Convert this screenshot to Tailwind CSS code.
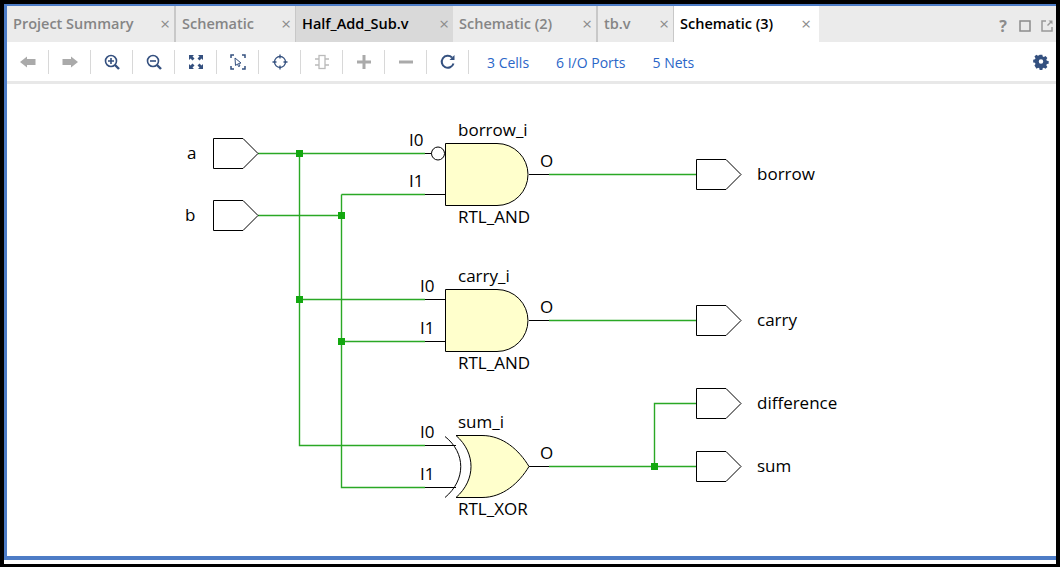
<!DOCTYPE html>
<html lang="en">
<head>
    <meta charset="UTF-8">
    <title>Schematic (3)</title>
    <script src="https://cdn.jsdelivr.net/npm/@tailwindcss/browser@4"></script>
</head>
<body class="bg-black overflow-hidden">
<div class="w-[1060px] h-[567px] bg-black pt-1 pl-1 pr-1 font-['Open_Sans',sans-serif]">
    <div class="h-[560px] bg-white">
    <div class="h-[556px] flex flex-col border-t-2 border-l-[3px] border-b-4 border-[#4d7cc6] bg-white">
        <!-- Tabs -->
        <div class="flex h-9 bg-[#ebebeb] text-[14.5px] font-semibold text-[#858585] shrink-0">
            <div class="w-[169px] flex items-center justify-between pl-1.5 pr-1 border-r-2 border-[#c8c8c8]"><span>Project Summary</span><span class="font-normal text-[17px] text-[#8c8c8c]">×</span></div>
            <div class="w-[120px] flex items-center justify-between pl-1.5 pr-1 border-r border-[#c8c8c8]"><span>Schematic</span><span class="font-normal text-[17px] text-[#8c8c8c]">×</span></div>
            <div class="w-[157px] flex items-center justify-between pl-1.5 pr-1 bg-[#d9d9d9] text-black"><span>Half_Add_Sub.v</span><span class="font-normal text-[17px] text-[#8c8c8c]">×</span></div>
            <div class="w-[145px] flex items-center justify-between pl-1.5 pr-1 border-r-2 border-[#c8c8c8]"><span>Schematic (2)</span><span class="font-normal text-[17px] text-[#8c8c8c]">×</span></div>
            <div class="w-[76px] flex items-center justify-between pl-1.5 pr-1 border-r border-[#c8c8c8]"><span>tb.v</span><span class="font-normal text-[17px] text-[#8c8c8c]">×</span></div>
            <div class="w-[145px] flex items-center justify-between pl-1.5 pr-2 bg-white text-black"><span>Schematic (3)</span><span class="font-normal text-[17px] text-[#8c8c8c]">×</span></div>
            <div class="flex-1 flex items-center justify-end gap-[8px] pr-[2px] pt-1">
                <span class="w-3.5 text-center text-[16px] font-bold text-[#8c8c8c]">?</span>
                <svg class="w-3.5 h-3.5" viewBox="0 0 14 14" fill="none" stroke="#8c8c8c"><rect x="2" y="2" width="10" height="10" stroke-width="1.5"/></svg>
                <svg class="w-3.5 h-3.5" viewBox="0 0 14 14" fill="none" stroke="#999999" stroke-width="1.5"><path d="M6 2H2v10h10V8"/><path d="M8.500 1.500h4v4z" fill="#999999" stroke="none"/><path d="M11 3L7.500 6.500"/></svg>
            </div>
        </div>

        <!-- Toolbar -->
        <div class="flex items-center h-[39px] pt-[1px] shrink-0">
            <div class="w-[42px] h-6 flex items-center justify-center border-r border-[#d8d8d8]">
                <svg class="w-4 h-4" viewBox="0 0 16 16" fill="#aaaaaa"><path d="M0 8l7-5.500V5h8.500v6H7v2.500z"/></svg>
            </div>
            <div class="w-[42px] h-6 flex items-center justify-center border-r border-[#d8d8d8]">
                <svg class="w-4 h-4" viewBox="0 0 16 16" fill="#aaaaaa"><path d="M16 8L9 2.500V5H.5v6H9v2.500z"/></svg>
            </div>
            <div class="w-[42px] h-6 flex items-center justify-center border-r border-[#d8d8d8]">
                <svg class="w-4 h-4" viewBox="0 0 16 16" fill="none" stroke="#34507f" stroke-width="1.600"><circle cx="7" cy="7" r="5.500"/><path d="M4 7h6M7 4v6"/><path d="M11 11l4 4" stroke-width="2.400"/></svg>
            </div>
            <div class="w-[42px] h-6 flex items-center justify-center border-r border-[#d8d8d8]">
                <svg class="w-4 h-4" viewBox="0 0 16 16" fill="none" stroke="#34507f" stroke-width="1.600"><circle cx="7" cy="7" r="5.500"/><path d="M4 7h6"/><path d="M11 11l4 4" stroke-width="2.400"/></svg>
            </div>
            <div class="w-[42px] h-6 flex items-center justify-center border-r border-[#d8d8d8]">
                <svg class="w-4 h-4" viewBox="0 0 16 16" fill="#34507f"><path d="M1 1h5L4.500 2.500 6.500 4.500 4.500 6.500 2.500 4.500 1 6zM15 1v5l-1.500-1.500-2 2-2-2 2-2L10 1zM1 15v-5l1.500 1.500 2-2 2 2-2 2L6 15zM15 15h-5l1.500-1.500-2-2 2-2 2 2L15 10z"/></svg>
            </div>
            <div class="w-[42px] h-6 flex items-center justify-center border-r border-[#d8d8d8]">
                <svg class="w-4 h-4" viewBox="0 0 16 16" fill="none" stroke="#34507f" stroke-width="1"><path d="M1 4V1h3M12 1h3v3M1 12v3h3M12 15h3v-3" stroke-width="1.500"/><path d="M5 4l6 5-2.500.5L10 12l-1.500.5-1-2.500L5.500 11.500z"/></svg>
            </div>
            <div class="w-[42px] h-6 flex items-center justify-center border-r border-[#d8d8d8]">
                <svg class="w-4 h-4" viewBox="0 0 16 16" fill="none" stroke="#34507f" stroke-width="1.300"><circle cx="8" cy="8" r="5.500"/><path d="M8 0.500v4M8 11.500v4M0.500 8h4M11.500 8h4"/></svg>
            </div>
            <div class="w-[42px] h-6 flex items-center justify-center border-r border-[#d8d8d8]">
                <svg class="w-4 h-4" viewBox="0 0 16 16" fill="none" stroke="#bbbbbb" stroke-width="1.300"><rect x="5" y="1.500" width="6" height="13"/><path d="M1 5h4M1 11h4M11 5h4M11 11h4"/></svg>
            </div>
            <div class="w-[42px] h-6 flex items-center justify-center border-r border-[#d8d8d8]">
                <svg class="w-4 h-4" viewBox="0 0 16 16" fill="#aaaaaa"><path d="M6.500 1h3v5.500H15v3H9.500V15h-3V9.500H1v-3h5.500z"/></svg>
            </div>
            <div class="w-[42px] h-6 flex items-center justify-center border-r border-[#d8d8d8]">
                <svg class="w-4 h-4" viewBox="0 0 16 16" fill="#aaaaaa"><path d="M1 6.500h14v3H1z"/></svg>
            </div>
            <div class="w-[42px] h-6 flex items-center justify-center border-r border-[#d8d8d8]">
                <svg class="w-4 h-4" viewBox="0 0 16 16" fill="none" stroke="#34507f" stroke-width="2"><path d="M13.500 9.500A6 6 0 1 1 12 3.500"/><path d="M14.500 1v5h-5z" fill="#34507f" stroke="none"/></svg>
            </div>
            <div class="flex items-center gap-[27px] pl-[18px] text-[14px] text-[#2a66c8]">
                <span>3 Cells</span>
                <span>6 I/O Ports</span>
                <span>5 Nets</span>
            </div>
            <svg class="w-4 h-4 ml-auto mr-[7px]" viewBox="0 0 16 16" fill="#34507f"><path fill-rule="evenodd" d="M6.500.5h3l.4 2.100 1.300.6 1.800-1.200 2.100 2.100-1.200 1.800.6 1.300 2 .4v3l-2 .4-.6 1.300 1.200 1.800-2.100 2.100-1.800-1.200-1.300.6-.4 2h-3l-.4-2-1.300-.6-1.800 1.200L.7 12.600l1.200-1.800-.6-1.300-2-.4v-3l2-.4.6-1.300L.7 2.600 2.800.5l1.800 1.200 1.300-.6zM8 5.500a2.500 2.500 0 1 0 0 5 2.500 2.500 0 0 0 0-5z" transform="translate(.8 .2) scale(.9)"/></svg>
        </div>
        <div class="h-[3px] bg-[#e8e8e8] shrink-0"></div>

        <!-- Schematic canvas -->
        <div class="flex-1 min-h-0">
            <svg class="block w-full h-full" viewBox="7 84 1049 472" fill="none" font-size="17">
                <!-- nets -->
                <g stroke="#2aa825" stroke-width="1.400">
                    <path d="M258 153.500H425"/>
                    <path d="M258 215.500H341.500"/>
                    <path d="M299.500 153.500V445.500H425"/>
                    <path d="M341.500 194.500H425M341.500 194.500V487.500H425"/>
                    <path d="M299.500 299.500H425M341.500 341.500H425"/>
                    <path d="M549 174.500H696M549 320.500H696M549 466.500H696"/>
                    <path d="M654.500 466.500V403.500H696"/>
                </g>
                <g fill="#13a80f">
                    <rect x="296" y="150" width="7" height="7"/>
                    <rect x="338" y="212" width="7" height="7"/>
                    <rect x="296" y="296" width="7" height="7"/>
                    <rect x="338" y="338" width="7" height="7"/>
                    <rect x="651" y="463" width="7" height="7"/>
                </g>
                <!-- pins -->
                <g stroke="#000000" stroke-width="1">
                    <path d="M425 153.500H432M425 194.500H445M425 299.500H445M425 341.500H445M425 445.500H456M425 487.500H456"/>
                    <path d="M529 174.500H549M529 320.500H549M529 466.500H549"/>
                    <circle cx="438" cy="153.500" r="6.500" fill="#ffffff"/>
                    <!-- gates -->
                    <path d="M445.500 143.500H497A31 31 0 0 1 497 205.500H445.500Z" fill="#ffffcc"/>
                    <path d="M445.500 289.500H497A31 31 0 0 1 497 351.500H445.500Z" fill="#ffffcc"/>
                    <path d="M456 435.500H482C503 435.500 519 450 529 466.500C519 483 503 497.500 482 497.500H456C476 480 476 453 456 435.500Z" fill="#ffffcc"/>
                    <path d="M445 436.500C466 453 466 480 445 497.500"/>
                    <!-- ports -->
                    <path d="M213.500 138.500H243L258 153.500L243 168.500H213.500Z" fill="#ffffff"/>
                    <path d="M213.500 200.500H243L258 215.500L243 230.500H213.500Z" fill="#ffffff"/>
                    <path d="M696.500 159.500H726L741 174.500L726 189.500H696.500Z" fill="#ffffff"/>
                    <path d="M696.500 305.500H726L741 320.500L726 335.500H696.500Z" fill="#ffffff"/>
                    <path d="M696.500 388.500H726L741 403.500L726 418.500H696.500Z" fill="#ffffff"/>
                    <path d="M696.500 451.500H726L741 466.500L726 481.500H696.500Z" fill="#ffffff"/>
                </g>
                <!-- labels -->
                <g fill="#000000" stroke="none">
                    <text x="187" y="159">a</text>
                    <text x="185" y="221">b</text>
                    <text x="409" y="146">I0</text>
                    <text x="409" y="187">I1</text>
                    <text x="458" y="136">borrow_i</text>
                    <text x="458" y="223">RTL_AND</text>
                    <text x="540" y="167">O</text>
                    <text x="420" y="292">I0</text>
                    <text x="420" y="334">I1</text>
                    <text x="458" y="282">carry_i</text>
                    <text x="458" y="369">RTL_AND</text>
                    <text x="540" y="313">O</text>
                    <text x="420" y="438">I0</text>
                    <text x="420" y="480">I1</text>
                    <text x="458" y="428">sum_i</text>
                    <text x="458" y="515">RTL_XOR</text>
                    <text x="540" y="459">O</text>
                    <text x="757" y="180">borrow</text>
                    <text x="757" y="326">carry</text>
                    <text x="757" y="409">difference</text>
                    <text x="757" y="472">sum</text>
                </g>
            </svg>
        </div>
    </div>
    </div>
</div>
</body>
</html>
